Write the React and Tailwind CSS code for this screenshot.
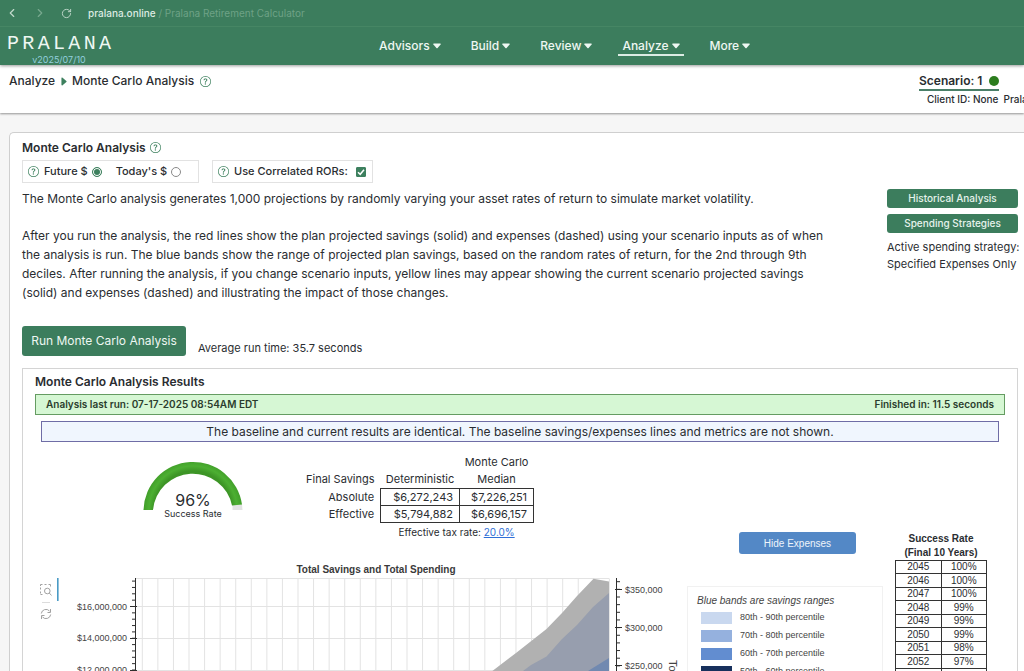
import React from "react";
import { BsQuestionCircle, BsCaretRightFill } from "react-icons/bs";
import { ChevronLeft, ChevronRight, RotateCw } from "lucide-react";

const NAV = ["Advisors", "Build", "Review", "Analyze", "More"];

const SUCCESS = [
  ["2045", "100%"],
  ["2046", "100%"],
  ["2047", "100%"],
  ["2048", "99%"],
  ["2049", "99%"],
  ["2050", "99%"],
  ["2051", "98%"],
  ["2052", "97%"],
];

const BANDS = [
  ["80th - 90th percentile", "bg-[#c9d8ef]"],
  ["70th - 80th percentile", "bg-[#95b1de]"],
  ["60th - 70th percentile", "bg-[#628dd0]"],
  ["50th - 60th percentile", "bg-[#17305c]"],
];

function Help() {
  return (
    <button type="button" aria-label="Help" className="flex text-[#3d805e]">
      <BsQuestionCircle size={11} />
    </button>
  );
}

function Caret() {
  return (
    <svg viewBox="0 0 8 6" className="h-1.5 w-2" fill="currentColor" aria-hidden="true">
      <path d="M0.8 0.5H7.2Q8 0.6 7.6 1.4L4.6 4.9Q4 5.500 3.400 4.900L0.400 1.400Q0 0.600 0.800 0.500Z" />
    </svg>
  );
}

function BrowserBar() {
  return (
    <div className="flex h-[27px] items-center border-b border-[#468664] pl-[5px] text-[10px] leading-4">
      <button type="button" aria-label="Back" className="text-[#c3dacd]">
        <ChevronLeft size={14} strokeWidth={2} />
      </button>
      <button type="button" aria-label="Forward" className="ml-3.5 text-[#78a98f]">
        <ChevronRight size={14} strokeWidth={2} />
      </button>
      <button type="button" aria-label="Reload" className="ml-3.5 text-[#c3dacd]">
        <RotateCw size={11} strokeWidth={2} />
      </button>
      <p className="ml-4 whitespace-pre text-[#6ea286]">
        <span className="font-medium text-[#dcebe3]">pralana.online</span>
        <span> / Pralana Retirement Calculator</span>
      </p>
    </div>
  );
}

function SiteHeader() {
  return (
    <header className="relative z-10 bg-[#3c7d5d] shadow-[0_1px_3px_rgba(0,0,0,0.4)]">
      <BrowserBar />
      <div className="flex h-[38px]">
        <div className="w-[371px] shrink-0 pl-[7px] pt-1.5">
          <div
            aria-label="Pralana"
            className="flex w-[104px] justify-between font-['Liberation_Mono',monospace] text-[20px] leading-[21px] text-[#eef7f2]"
          >
            {"PRALANA".split("").map((c, i) => (
              <span key={i}>{c}</span>
            ))}
          </div>
          <div className="w-[104px] text-center text-[9px] leading-[11px] text-[#93cfdd]">v2025/07/10</div>
        </div>
        <nav className="flex items-start gap-[22px] pt-[11px] pl-1">
          {NAV.map((n) => (
            <a
              key={n}
              href="#"
              className={
                "flex items-center gap-[3px] border-b-2 px-1 text-[12px] leading-4 font-medium text-[#eef7f2] " +
                (n === "Analyze" ? "border-[#dcece4]" : "border-transparent")
              }
            >
              {n}
              <Caret />
            </a>
          ))}
        </nav>
      </div>
    </header>
  );
}

function Gauge() {
  return (
    <div className="relative h-[60px] w-[100px]">
      <svg viewBox="0 0 100 52" className="block h-[52px] w-[100px]" aria-hidden="true">
        <defs>
          <radialGradient id="ring" gradientUnits="userSpaceOnUse" cx="50" cy="50" r="50">
            <stop offset="0.78" stopColor="#3d9526" />
            <stop offset="0.88" stopColor="#4caf32" />
            <stop offset="1" stopColor="#3f9c28" />
          </radialGradient>
        </defs>
        <path d="M89.500 50L89.500 45L99 44L99.500 50Z" fill="#e3e3e3" />
        <path d="M0.5 50A49.5 49.5 0 0 1 99 44.5L89 45.5A40 40 0 0 0 10 50Z" fill="url(#ring)" />
      </svg>
      <div className="absolute inset-x-0 top-8 text-center">
        <div className="text-[16px] leading-4">96%</div>
        <div className="text-[9px] leading-3">Success Rate</div>
      </div>
    </div>
  );
}

function SavingsTable() {
  return (
    <div className="text-[11px]">
      <table className="border-collapse leading-[16px]">
        <thead className="leading-[17px]">
          <tr>
            <td />
            <td />
            <th className="font-normal">Monte Carlo</th>
          </tr>
          <tr>
            <th className="w-[73px] pr-1.5 text-right font-normal whitespace-nowrap">Final Savings</th>
            <th className="w-[79px] font-normal">Deterministic</th>
            <th className="w-[74px] font-normal">Median</th>
          </tr>
        </thead>
        <tbody>
          <tr>
            <th className="pr-1.5 text-right font-normal">Absolute</th>
            <td className="border border-[#333] pr-1.5 text-right">$6,272,243</td>
            <td className="border border-[#333] pr-1.5 text-right">$7,226,251</td>
          </tr>
          <tr>
            <th className="pr-1.5 text-right font-normal">Effective</th>
            <td className="border border-[#333] pr-1.5 text-right">$5,794,882</td>
            <td className="border border-[#333] pr-1.5 text-right">$6,696,157</td>
          </tr>
        </tbody>
      </table>
      <p className="pt-px pl-[73px] text-center text-[10px] leading-4">
        Effective tax rate:{" "}
        <a href="#" className="text-[#2f6fd6] underline">
          20.0%
        </a>
      </p>
    </div>
  );
}

const range = (n) => Array.from({ length: n }, (_, i) => i);

/* Coordinates start at the plot toolbar: x = 0 is its left edge, y = 0 the top of the plot. */
function Chart() {
  return (
    <figure>
      <figcaption className="pl-8 text-center font-['Liberation_Sans',sans-serif] text-[10px] leading-3 font-bold text-[#3a3a3a]">
        Total Savings and Total Spending
      </figcaption>
      <svg
        width="650"
        height="130"
        viewBox="0 0 650 130"
        className="mt-0.5 block"
        fontFamily="Liberation Sans, sans-serif"
        fontSize="9"
        fill="#444"
      >
        <g fill="none" stroke="#a2a2a2" strokeWidth="1">
          <path d="M5.500 15.500V13.500M5.500 11.500V9.500M5.500 8V6.500H7.500M9.500 6.500H11.500M13.500 6.500H15.500V8.500M5.500 16.500H7.500" />
          <circle cx="12.300" cy="13" r="2.800" />
          <path d="M14.300 15L16.500 17.500" />
          <path d="M7 24.500H15" stroke="#dcdcdc" />
          <path d="M6.300 35.500A4.700 4.700 0 0 1 14.500 33M15.700 36.500A4.700 4.700 0 0 1 7.500 39M15.500 31V34.500H12.500M6.500 41V37.500H9.500" />
        </g>
        <rect x="22" y="0" width="1.600" height="23" fill="#4a9bc6" />
        <g stroke="#e3e3e3" strokeWidth="1">
          {range(31).map((i) => (
            <line key={i} x1={107.3 + i * 15.57} x2={107.3 + i * 15.57} y1="0.500" y2="130" />
          ))}
          {[0.5, 28.5, 60.5, 92.5, 124.5].map((y) => (
            <line key={y} x1="100" x2="574" y1={y} y2={y} />
          ))}
        </g>
        <path d="M410 130L458 92.500L481 75L511.500 51L527 35L542 18L558.500 0.800L574 3.500V130Z" fill="#b1b1b1" />
        <path d="M470 130L488 93L496 87L511.500 78.500L527 61L542 47L558 29L574 15V130Z" fill="#979eae" />
        <path d="M500 130L553 93L574 80V130Z" fill="#7189b0" />
        <g stroke="#2e2e2e" strokeWidth="1">
          <line x1="100.500" x2="100.500" y1="0" y2="130" />
          {[28.5, 60.5, 92.5].map((y) => (
            <line key={y} x1="95" x2="102" y1={y} y2={y} />
          ))}
          {range(20).map((i) => (
            <line key={i} x1="97" x2="100" y1={3.1 + i * 6.35} y2={3.1 + i * 6.35} />
          ))}
          <line x1="581.500" x2="581.500" y1="0" y2="130" />
          {[11.5, 49.5, 87.5].map((y) => (
            <line key={y} x1="580" x2="587" y1={y} y2={y} />
          ))}
          {range(16).map((i) => (
            <line key={i} x1="582" x2="585" y1={3.7 + i * 7.65} y2={3.7 + i * 7.65} />
          ))}
        </g>
        <g textAnchor="end">
          <text x="92" y="32">$16,000,000</text>
          <text x="92" y="63">$14,000,000</text>
          <text x="92" y="95">$12,000,000</text>
        </g>
        <text x="590" y="15">$350,000</text>
        <text x="590" y="53">$300,000</text>
        <text x="590" y="91">$250,000</text>
        <text transform="translate(634 82) rotate(90)" fontSize="11">Total</text>
      </svg>
    </figure>
  );
}

function Results() {
  return (
    <section className="mr-1.5 mt-3 border border-[#d4d4d4] px-3 pt-1">
      <h2 className="text-[12px] leading-[17px] font-semibold">Monte Carlo Analysis Results</h2>
      <div className="mt-1 flex h-[21px] items-center justify-between border border-[#659c62] bg-[#d6f7d4] px-2.5 text-[10px] font-semibold text-[#2b3d2d]">
        <span>Analysis last run: 07-17-2025 08:54AM EDT</span>
        <span>Finished in: 11.5 seconds</span>
      </div>
      <div className="mx-1.5 mt-1.5 flex h-[21px] items-center justify-center border border-[#6f6da6] bg-[#f0f6fe] text-[12px]">
        The baseline and current results are identical. The baseline savings/expenses lines and metrics are not shown.
      </div>
      <div className="flex">
        <div className="w-[650px] shrink-0 pt-3">
          <div className="flex gap-[63px] pl-[108px]">
            <div className="pt-1.5">
              <Gauge />
            </div>
            <SavingsTable />
          </div>
          <div className="pt-6">
            <Chart />
          </div>
        </div>
        <div className="grow pt-[90px]">
          <button
            type="button"
            className="ml-[54px] block h-[22px] w-[117px] rounded-[3px] bg-[#5388c6] font-['Liberation_Sans',sans-serif] text-[10px] text-[#eef4fb]"
          >
            Hide Expenses
          </button>
          <div className="mt-8 ml-[2px] w-[196px] border border-[#f1f1f1] px-[9px] pt-[7px] font-['Liberation_Sans',sans-serif] text-[9px] text-[#444]">
            <p className="text-[10px] leading-[14px] italic">Blue bands are savings ranges</p>
            <ul className="mt-px">
              {BANDS.map(([t, c]) => (
                <li key={t} className="flex h-[18px] items-center gap-2 pl-1">
                  <span className={"h-3 w-[31px] " + c} />
                  {t}
                </li>
              ))}
            </ul>
          </div>
        </div>
        <div className="mr-[18px] w-[92px] shrink-0 pt-[90px] font-['Liberation_Sans',sans-serif] text-[10px]">
          <table className="w-full border-collapse text-center">
            <caption className="text-[10px] leading-[14px] font-bold whitespace-nowrap">
              Success Rate
              <br />
              (Final 10 Years)
            </caption>
            <tbody>
              {SUCCESS.map(([y, p]) => (
                <tr key={y} className="h-[13px] leading-3 even:h-[14px]">
                  <td className="w-1/2 border border-[#333] p-0">{y}</td>
                  <td className="w-1/2 border border-[#333] p-0">{p}</td>
                </tr>
              ))}
              <tr className="h-[13px]">
                <td className="border border-[#333] p-0" />
                <td className="border border-[#333] p-0" />
              </tr>
            </tbody>
          </table>
        </div>
      </div>
    </section>
  );
}

export default function App() {
  return (
    <div className="h-screen overflow-hidden bg-[#f6f6f6] font-['Inter',sans-serif] text-[#2a2d31]">
      <SiteHeader />
      <div className="flex h-[48px] justify-between bg-white shadow-[0_1px_2px_rgba(0,0,0,0.4)]">
        <div className="flex h-8 items-center pl-[9px] text-[12px] font-medium">
          <a href="#">Analyze</a>
          <BsCaretRightFill size={11} className="mx-[3px] text-[#3d805e]" />
          <span className="mr-1.5">Monte Carlo Analysis</span>
          <Help />
        </div>
        <div className="w-[105px] overflow-hidden pt-[7px] whitespace-nowrap">
          <button
            type="button"
            className="flex items-center gap-[7px] border-b-2 border-[#4a7f68] text-[12px] leading-[17px] font-semibold"
          >
            Scenario: 1<span className="size-2.5 rounded-full bg-[#2c7d1e]" />
          </button>
          <p className="flex gap-[5px] pt-px pl-2 text-[10px] leading-[14px] font-medium">
            <span>Client ID: None</span>
            <span>Pralana</span>
          </p>
        </div>
      </div>

      <main className="mt-[19px] ml-[9px] rounded-tl-[5px] border-t border-l border-[#cfcfcf] bg-white pt-1.5 pl-3">
        <h1 className="flex items-center gap-1 text-[12px] leading-[17px] font-semibold">
          Monte Carlo Analysis
          <Help />
        </h1>
        <div className="mt-1 flex gap-[13px] text-[11px] font-medium">
          <fieldset className="flex h-[23px] w-[177px] items-center border border-[#e2e2e2] pl-[5px]">
            <Help />
            <label className="ml-[5px] flex items-center gap-1">
              Future $
              <input
                type="radio"
                name="dollars"
                defaultChecked
                className="size-[10px] appearance-none rounded-full border border-[#3d805e] checked:bg-[#3d805e] checked:shadow-[inset_0_0_0_1px_white]"
              />
            </label>
            <label className="ml-3.5 flex items-center gap-1">
              Today's $
              <input
                type="radio"
                name="dollars"
                className="size-[10px] appearance-none rounded-full border border-[#8a8a8a] checked:bg-[#3d805e] checked:shadow-[inset_0_0_0_1px_white]"
              />
            </label>
          </fieldset>
          <div className="flex h-[23px] w-[161px] items-center border border-[#e2e2e2] pl-[5px]">
            <Help />
            <label className="ml-[5px] flex items-center gap-2">
              Use Correlated RORs:
              <span className="relative flex">
                <input
                  type="checkbox"
                  defaultChecked
                  className="peer size-[10px] appearance-none rounded-[1px] border border-[#3d805e] checked:bg-[#3d805e]"
                />
                <svg
                  viewBox="0 0 10 10"
                  className="pointer-events-none absolute inset-0 hidden size-[10px] peer-checked:block"
                  fill="none"
                  stroke="white"
                  strokeWidth="1.500"
                  aria-hidden="true"
                >
                  <path d="M2 5.200L4.200 7.300L8 2.700" />
                </svg>
              </span>
            </label>
          </div>
        </div>

        <div className="flex items-start justify-between">
          <div className="w-[810px] pt-1.5 text-[12px] leading-[19px]">
            <p>
              The Monte Carlo analysis generates 1,000 projections by randomly varying your asset rates of return to
              simulate market volatility.
            </p>
            <p className="mt-[18px]">
              After you run the analysis, the red lines show the plan projected savings (solid) and expenses (dashed)
              using your scenario inputs as of when the analysis is run. The blue bands show the range of projected plan
              savings, based on the random rates of return, for the 2nd through 9th deciles. After running the analysis,
              if you change scenario inputs, yellow lines may appear showing the current scenario projected savings
              (solid) and expenses (dashed) and illustrating the impact of those changes.
            </p>
          </div>
          <aside className="mr-1.5 flex w-[131px] flex-col gap-1.5 pt-1.5 text-[10px]">
            <button type="button" className="h-[19px] rounded-[3px] bg-[#3c7d5d] font-medium text-[#e6f3ec]">
              Historical Analysis
            </button>
            <button type="button" className="h-[19px] rounded-[3px] bg-[#3c7d5d] font-medium text-[#e6f3ec]">
              Spending Strategies
            </button>
            <p className="text-[11px] leading-[17px] whitespace-nowrap">
              Active spending strategy:
              <br />
              Specified Expenses Only
            </p>
          </aside>
        </div>

        <div className="mt-6 flex items-end gap-3">
          <button type="button" className="h-[30px] w-[164px] rounded-[3px] bg-[#3c7d5d] text-[12px] text-[#eef7f2]">
            Run Monte Carlo Analysis
          </button>
          <p className="text-[11px] leading-4">Average run time: 35.7 seconds</p>
        </div>

        <Results />
      </main>
    </div>
  );
}
